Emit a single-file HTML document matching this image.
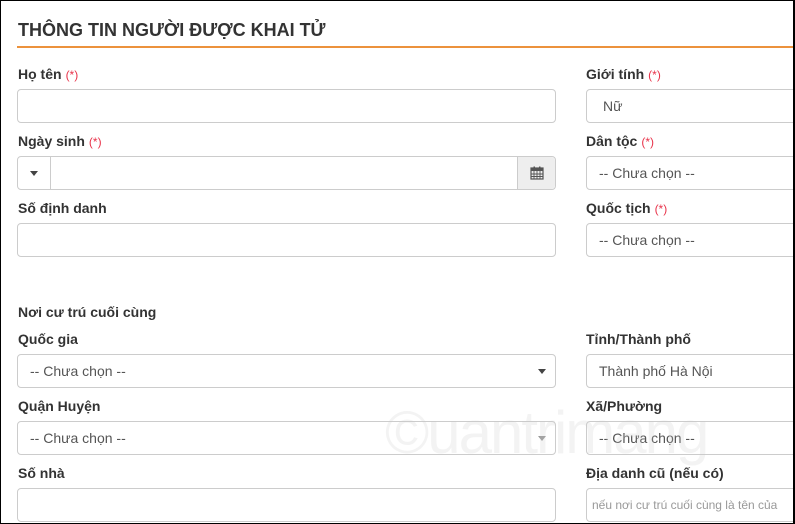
<!DOCTYPE html><html><head><meta charset="utf-8"><style>
*{box-sizing:border-box}
body{margin:0;width:795px;height:524px;overflow:hidden;background:#fff;font-family:"Liberation Sans",Arial,sans-serif;color:#333;position:relative}
.frame{position:absolute;left:0;top:0;width:795px;height:524px;border:1px solid #000;border-right:2px solid #000;z-index:5;pointer-events:none}
.title{position:absolute;left:18px;top:20px;font-size:18px;font-weight:bold;color:#333;letter-spacing:0px}
.line{position:absolute;left:17px;top:46px;width:778px;height:2px;background:#ec923c}
.lb{position:absolute;font-size:14px;font-weight:bold;color:#333}
.lb i{font-style:normal;font-weight:normal;color:#e8334a;font-size:12px;margin-left:4px}
.in{position:absolute;height:34px;border:1px solid #ccc;border-radius:4px;background:#fff;font-size:14px;color:#555;padding:0 12px;line-height:32px}
.L{left:17px;width:539px}.R{left:586px;width:220px}
.car{position:absolute;width:0;height:0;border-left:4px solid transparent;border-right:4px solid transparent;border-top:5px solid #444}
</style></head><body>
<div class="frame"></div>
<div class="title">THÔNG TIN NGƯỜI ĐƯỢC KHAI TỬ</div>
<div class="line"></div>

<div class="lb" style="left:18px;top:66px">Họ tên<i>(*)</i></div>
<div class="in L" style="top:89px"></div>
<div class="lb" style="left:586px;top:66px">Giới tính<i>(*)</i></div>
<div class="in R" style="top:89px;padding-left:16px">Nữ</div>

<div class="lb" style="left:18px;top:133px">Ngày sinh<i>(*)</i></div>
<div class="in L" style="top:156px;padding:0">
 <div style="position:absolute;left:0;top:0;width:33px;height:32px;border-right:1px solid #ccc"><div class="car" style="left:12px;top:14px"></div></div>
 <div style="position:absolute;right:0;top:0;width:38px;height:32px;border-left:1px solid #ccc;background:#eee;border-radius:0 4px 4px 0">
  <svg width="14" height="14" viewBox="0 0 14 14" style="position:absolute;left:12px;top:9px"><rect x="1" y="2" width="12" height="11" fill="none" stroke="#555" stroke-width="1.2"/><rect x="1" y="2" width="12" height="3" fill="#555"/><path d="M1 8h12M1 10.5h12M4 5v8M7 5v8M10 5v8" stroke="#555" stroke-width="0.9"/><rect x="3.5" y="0.5" width="1.5" height="3" fill="#555"/><rect x="9" y="0.5" width="1.5" height="3" fill="#555"/></svg>
 </div>
</div>
<div class="lb" style="left:586px;top:133px">Dân tộc<i>(*)</i></div>
<div class="in R" style="top:156px">-- Chưa chọn --</div>

<div class="lb" style="left:18px;top:200px">Số định danh</div>
<div class="in L" style="top:223px"></div>
<div class="lb" style="left:586px;top:200px">Quốc tịch<i>(*)</i></div>
<div class="in R" style="top:223px">-- Chưa chọn --</div>

<div class="lb" style="left:18px;top:304px;font-weight:600">Nơi cư trú cuối cùng</div>

<div class="lb" style="left:18px;top:331px">Quốc gia</div>
<div class="in L" style="top:354px">-- Chưa chọn --<div class="car" style="position:absolute;right:9px;top:14px"></div></div>
<div class="lb" style="left:586px;top:331px">Tỉnh/Thành phố</div>
<div class="in R" style="top:354px">Thành phố Hà Nội</div>

<div class="lb" style="left:18px;top:398px">Quận Huyện</div>
<div class="in L" style="top:421px">-- Chưa chọn --<div class="car" style="position:absolute;right:9px;top:14px;border-top-color:#999"></div></div>
<div class="lb" style="left:586px;top:398px">Xã/Phường</div>
<div class="in R" style="top:421px">-- Chưa chọn --</div>

<div class="lb" style="left:18px;top:465px">Số nhà</div>
<div class="in L" style="top:488px"></div>
<div class="lb" style="left:586px;top:465px">Địa danh cũ (nếu có)</div>
<div class="in R" style="top:488px;padding-left:5px;font-size:12px;color:#999">nếu nơi cư trú cuối cùng là tên của</div>

<div style="position:absolute;left:385px;top:398px;font-size:60px;color:rgba(200,200,200,0.22);font-family:'Liberation Sans',sans-serif;letter-spacing:-2px">©uantrimang</div>
</body></html>
